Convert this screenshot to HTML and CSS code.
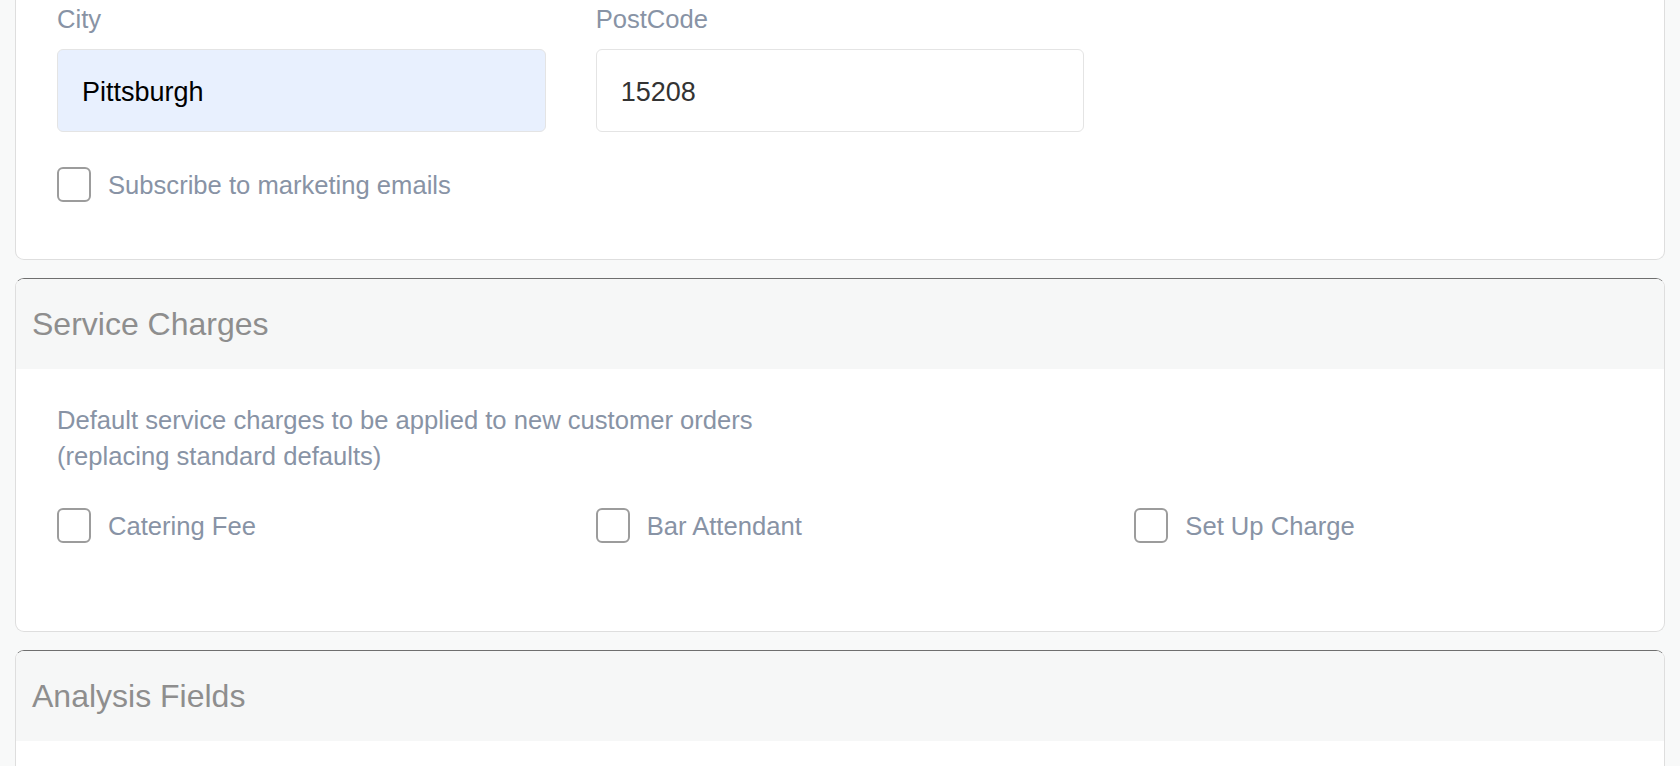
FILE: index.html
```html
<!DOCTYPE html>
<html lang="en">
<head>
<meta charset="utf-8">
<title>Customer settings</title>
<link rel="stylesheet" href="styles.css">
</head>
<body>
<div class="page">
  <section class="card card--cut">
    <div class="card-body card-body--address">
      <div class="grid3">
        <div class="field">
          <label class="field-label" for="city">City</label>
          <input class="field-input field-input--autofill" id="city" type="text" value="Pittsburgh">
        </div>
        <div class="field">
          <label class="field-label" for="postcode">PostCode</label>
          <input class="field-input" id="postcode" type="text" value="15208">
        </div>
      </div>
      <label class="check check--standalone">
        <span class="check-box"></span>
        <span class="check-text">Subscribe to marketing emails</span>
      </label>
    </div>
  </section>

  <section class="card">
    <header class="card-header">Service Charges</header>
    <div class="card-body card-body--charges">
      <p class="desc">Default service charges to be applied to new customer orders<br>(replacing standard defaults)</p>
      <div class="grid3">
        <label class="check"><span class="check-box"></span><span class="check-text">Catering Fee</span></label>
        <label class="check"><span class="check-box"></span><span class="check-text">Bar Attendant</span></label>
        <label class="check"><span class="check-box"></span><span class="check-text">Set Up Charge</span></label>
      </div>
    </div>
  </section>

  <section class="card">
    <header class="card-header">Analysis Fields</header>
    <div class="card-body card-body--analysis"></div>
  </section>
</div>
</body>
</html>
```

FILE: styles.css
```css
* { box-sizing: border-box; }

html, body {
  margin: 0;
  padding: 0;
  background: #f8f9f9;
  font-family: "Liberation Sans", Arial, Helvetica, sans-serif;
  overflow: hidden;
}

.page {
  padding: 0 15px 0 15px;
}

.card {
  background: #ffffff;
  border: 1px solid #dedede;
  border-top: 1px solid #6f6f6f;
  border-radius: 9px;
  margin-top: 18px;
  overflow: hidden;
}

.card--cut {
  margin-top: 0;
  border-top: none;
  border-radius: 0 0 9px 9px;
}

.card-header {
  height: 90px;
  display: flex;
  align-items: center;
  padding-left: 16px;
  background: #f6f7f7;
  color: #8e8e8e;
  font-size: 32px;
}

.card-body {
  padding: 0 41px;
}

.card-body--address {
  padding-top: 2px;
  padding-bottom: 57px;
}

.card-body--charges {
  padding-top: 33px;
  padding-bottom: 88px;
}

.card-body--analysis {
  height: 120px;
}

.grid3 {
  display: grid;
  grid-template-columns: repeat(3, 1fr);
  column-gap: 50px;
}

.field {
  display: flex;
  flex-direction: column;
}

.field-label {
  font-size: 25.6px;
  line-height: 35px;
  color: #8893a5;
  margin-bottom: 12px;
}

.field-input {
  height: 83px;
  width: 100%;
  border: 1px solid #e4e4e4;
  border-radius: 6px;
  padding: 4px 24px 0 24px;
  font-family: inherit;
  font-size: 27px;
  color: #333333;
  background: #ffffff;
  outline: none;
}

.field-input--autofill {
  background: #e8f0fe;
  color: #000000;
}

.check {
  display: flex;
  align-items: center;
  gap: 17px;
  height: 35px;
}

.check--standalone {
  margin-top: 35px;
}

.check-box {
  flex: none;
  width: 34px;
  height: 35px;
  border: 2px solid #9c9c9c;
  border-radius: 6px;
  background: #ffffff;
}

.check-text {
  font-size: 25.6px;
  color: #8893a5;
  white-space: nowrap;
  padding-top: 2px;
}

.desc {
  margin: 0 0 34px 0;
  font-size: 25.6px;
  line-height: 36px;
  color: #8893a5;
}
```
